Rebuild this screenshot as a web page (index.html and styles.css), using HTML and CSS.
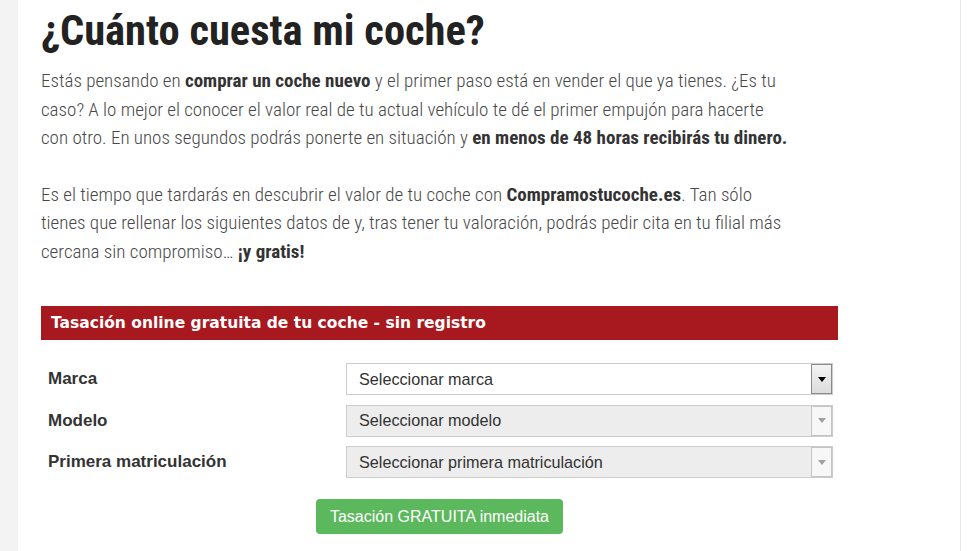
FILE: index.html
```html
<!DOCTYPE html>
<html lang="es">
<head>
<meta charset="utf-8">
<title>¿Cuánto cuesta mi coche?</title>
<link rel="stylesheet" href="styles.css">
</head>
<body>
<div class="page">
  <div class="leftbar"></div>
  <main class="main">
    <h1 class="title">¿Cuánto cuesta mi coche?</h1>
    <div class="intro">
      <p>Estás pensando en <b>comprar un coche nuevo</b> y el primer paso está en vender el que ya tienes. ¿Es tu caso? A lo mejor el conocer el valor real de tu actual vehículo te dé el primer empujón para hacerte con otro. En unos segundos podrás ponerte en situación y <b>en menos de 48 horas recibirás tu dinero.</b></p>
      <p>Es el tiempo que tardarás en descubrir el valor de tu coche con <b>Compramostucoche.es</b>. Tan sólo tienes que rellenar los siguientes datos de y, tras tener tu valoración, podrás pedir cita en tu filial más cercana sin compromiso… <b>¡y gratis!</b></p>
    </div>
    <section class="form">
      <div class="form-head">Tasación online gratuita de tu coche - sin registro</div>
      <div class="rows">
        <div class="row">
          <label class="label">Marca</label>
          <div class="select">
            <span class="select-text">Seleccionar marca</span>
            <span class="arrow"><span class="tri"></span></span>
          </div>
        </div>
        <div class="row">
          <label class="label">Modelo</label>
          <div class="select disabled">
            <span class="select-text">Seleccionar modelo</span>
            <span class="arrow"><span class="tri"></span></span>
          </div>
        </div>
        <div class="row">
          <label class="label">Primera matriculación</label>
          <div class="select disabled">
            <span class="select-text">Seleccionar primera matriculación</span>
            <span class="arrow"><span class="tri"></span></span>
          </div>
        </div>
      </div>
      <div class="actions">
        <button class="btn">Tasación GRATUITA inmediata</button>
      </div>
    </section>
  </main>
  <div class="rightbar"></div>
</div>
</body>
</html>
```
FILE: styles.css
```css
html, body {
  margin: 0;
  padding: 0;
  background: #ffffff;
}
body {
  width: 980px;
  height: 551px;
  overflow: hidden;
}
.page {
  display: flex;
  height: 551px;
}
.leftbar {
  width: 18px;
  flex: none;
  background: #f3f3f3;
}
.main {
  width: 919px;
  flex: none;
  padding-left: 23px;
  border-right: 1px solid #e8e8e8;
}
.rightbar {
  flex: 1;
  background: #ffffff;
}
.title {
  margin: 0;
  padding-top: 4px;
  height: 54px;
  font-family: "Roboto Condensed", Roboto, sans-serif;
  font-stretch: condensed;
  font-weight: 700;
  font-size: 42.5px;
  line-height: 54px;
  color: #222222;
  white-space: nowrap;
}
.intro {
  width: 752px;
  margin-top: 9px;
  font-family: "Roboto Condensed", Roboto, sans-serif;
  font-stretch: condensed;
  font-weight: 300;
  font-size: 19px;
  line-height: 28.5px;
  color: #484848;
}
.intro p {
  margin: 0 0 28px 0;
}
.intro p:last-child {
  margin-bottom: 0;
}
.intro b {
  font-weight: 700;
  color: #333333;
}
.form {
  width: 797px;
  margin-top: 40px;
}
.form-head {
  height: 34px;
  background: #a8191f;
  color: #ffffff;
  font-family: "DejaVu Sans", Verdana, sans-serif;
  font-weight: 700;
  font-size: 15.5px;
  line-height: 34px;
  padding-left: 10px;
}
.rows {
  display: flex;
  flex-direction: column;
  gap: 9.5px;
  margin-top: 23px;
}
.row {
  display: flex;
  align-items: center;
  height: 32px;
  padding-left: 7px;
}
.label {
  width: 298px;
  flex: none;
  font-family: "Liberation Sans", Arial, sans-serif;
  font-weight: 700;
  font-size: 17px;
  color: #333333;
}
.select {
  width: 487px;
  height: 32px;
  box-sizing: border-box;
  border: 1px solid #cccccc;
  background: #ffffff;
  display: flex;
  align-items: center;
  justify-content: space-between;
  font-family: "Liberation Sans", Arial, sans-serif;
  font-size: 16.2px;
  color: #333333;
}
.select-text {
  padding-left: 12px;
}
.arrow {
  width: 21px;
  height: 30px;
  box-sizing: border-box;
  border: 1px solid #8a8a8a;
  background: linear-gradient(#f4f4f4, #dcdcdc);
  display: flex;
  align-items: center;
  justify-content: center;
}
.tri {
  width: 0;
  height: 0;
  border-left: 4px solid transparent;
  border-right: 4px solid transparent;
  border-top: 5px solid #000000;
}
.select.disabled {
  background: #ededed;
}
.select.disabled .arrow {
  border-color: #c4c4c4;
  background: #f7f7f7;
}
.select.disabled .tri {
  border-top-color: #a0a0a0;
}
.actions {
  display: flex;
  justify-content: center;
  margin-top: 21px;
}
.btn {
  width: 247px;
  height: 35px;
  border: none;
  border-radius: 4px;
  background: #5cb85c;
  color: #ffffff;
  font-family: "Liberation Sans", Arial, sans-serif;
  font-size: 16px;
  padding: 0;
}
```
